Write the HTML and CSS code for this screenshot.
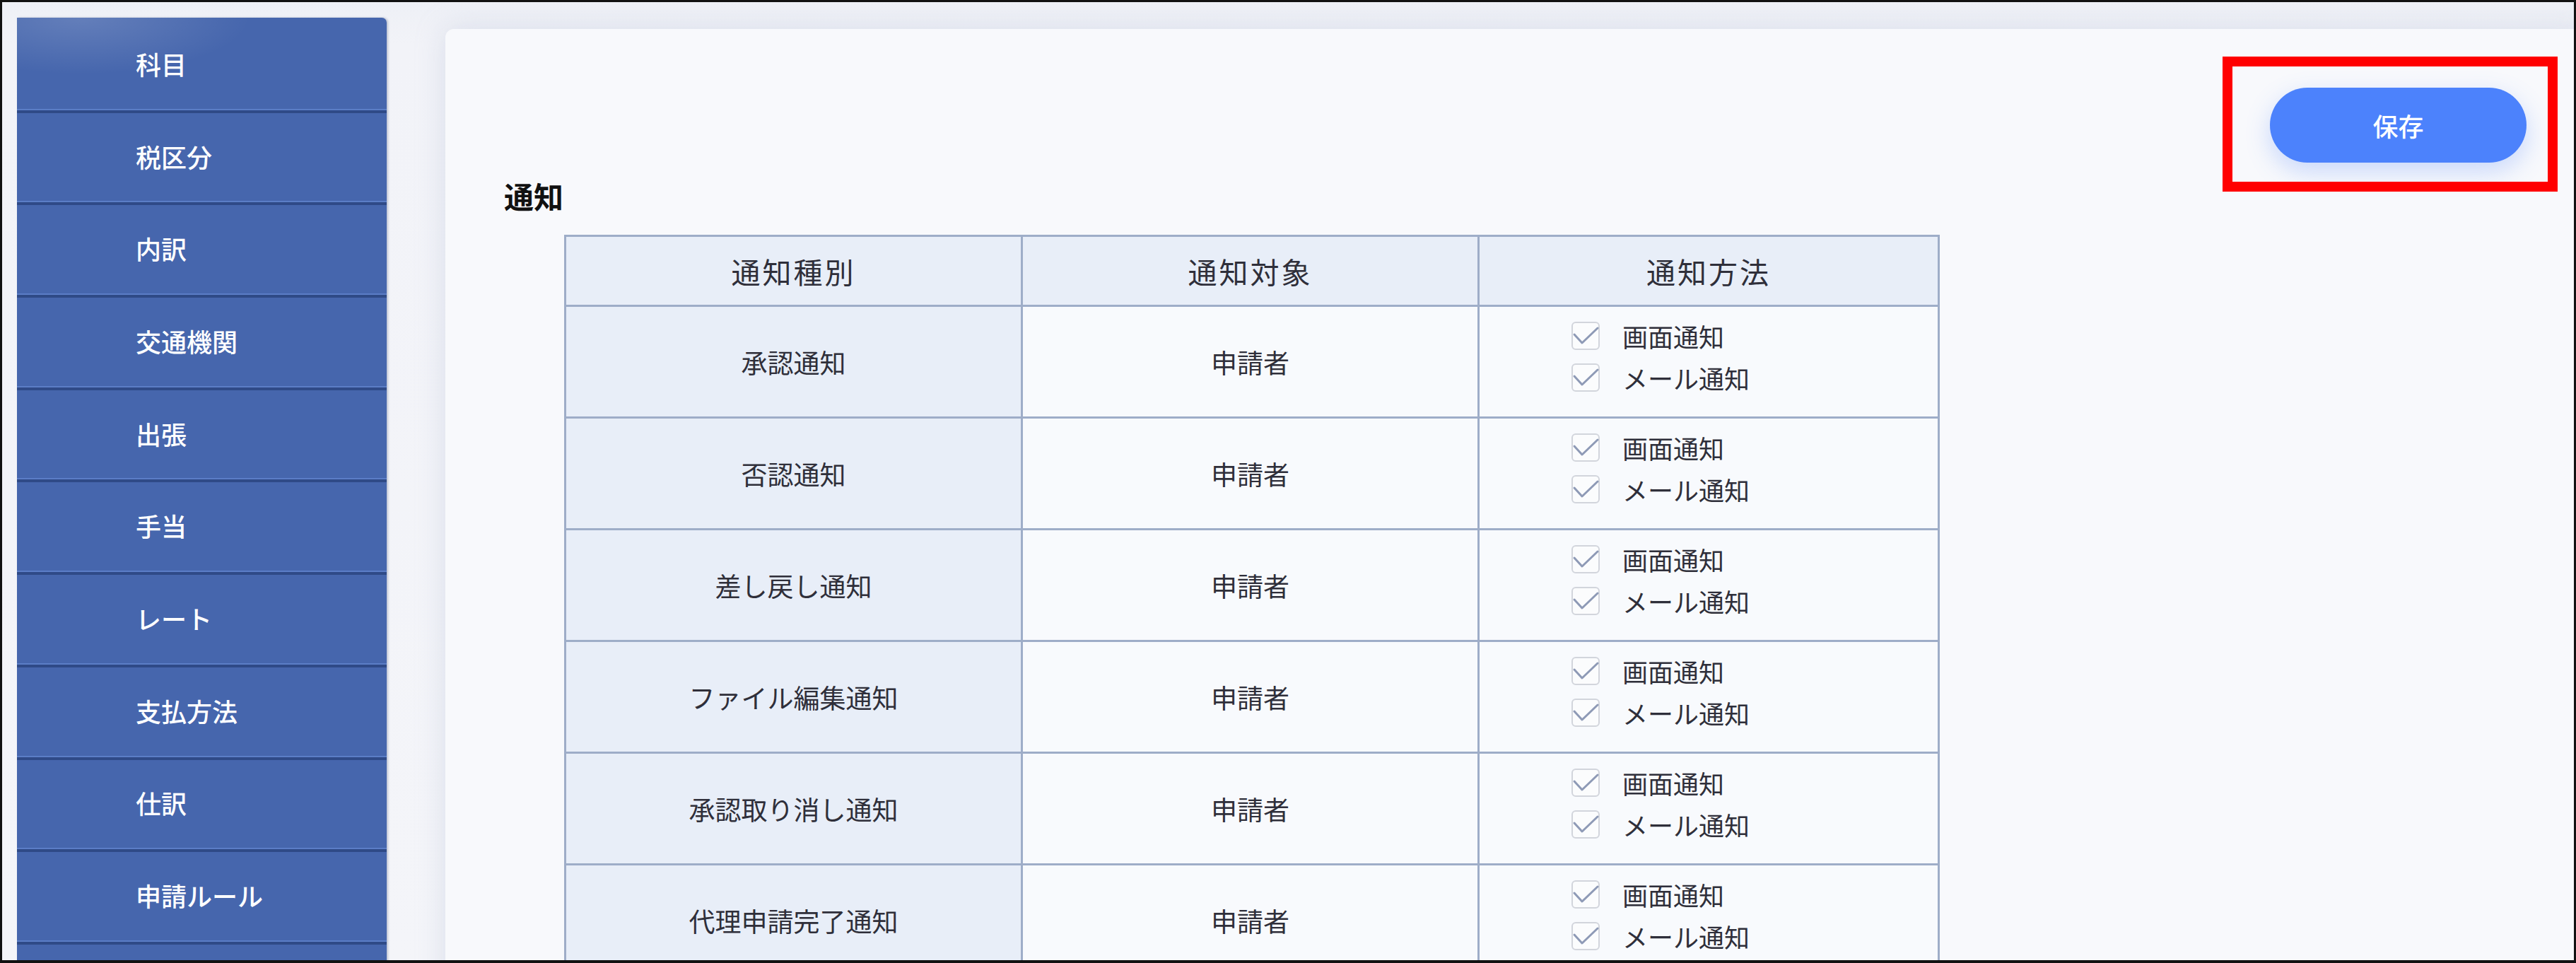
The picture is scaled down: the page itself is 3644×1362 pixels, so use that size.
FILE: index.html
```html
<!DOCTYPE html>
<html lang="ja">
<head>
<meta charset="utf-8">
<title>通知設定</title>
<link rel="stylesheet" href="styles.css">
</head>
<body>
<div class="frame">
  <nav class="sidebar">
    <div class="nav-item">科目</div>
    <div class="nav-item">税区分</div>
    <div class="nav-item">内訳</div>
    <div class="nav-item">交通機関</div>
    <div class="nav-item">出張</div>
    <div class="nav-item">手当</div>
    <div class="nav-item">レート</div>
    <div class="nav-item">支払方法</div>
    <div class="nav-item">仕訳</div>
    <div class="nav-item">申請ルール</div>
    <div class="nav-item"></div>
  </nav>
  <main class="card">
    <div class="toolbar">
      <button class="btn-save">保存</button>
    </div>
    <h2 class="section-title">通知</h2>
    <table class="notify-table">
      <colgroup>
        <col class="c1"><col class="c2"><col class="c3">
      </colgroup>
      <thead>
        <tr>
          <th><div class="hcell">通知種別</div></th>
          <th><div class="hcell">通知対象</div></th>
          <th><div class="hcell">通知方法</div></th>
        </tr>
      </thead>
      <tbody>
        <tr>
          <td class="kind"><div class="cell">承認通知</div></td>
          <td><div class="cell">申請者</div></td>
          <td><div class="cell methods"><label class="opt"><span class="cb"><svg viewBox="0 0 40 40"><polyline points="4,18 15,30 37,9"/></svg></span>画面通知</label><label class="opt"><span class="cb"><svg viewBox="0 0 40 40"><polyline points="4,18 15,30 37,9"/></svg></span>メール通知</label></div></td>
        </tr>
        <tr>
          <td class="kind"><div class="cell">否認通知</div></td>
          <td><div class="cell">申請者</div></td>
          <td><div class="cell methods"><label class="opt"><span class="cb"><svg viewBox="0 0 40 40"><polyline points="4,18 15,30 37,9"/></svg></span>画面通知</label><label class="opt"><span class="cb"><svg viewBox="0 0 40 40"><polyline points="4,18 15,30 37,9"/></svg></span>メール通知</label></div></td>
        </tr>
        <tr>
          <td class="kind"><div class="cell">差し戻し通知</div></td>
          <td><div class="cell">申請者</div></td>
          <td><div class="cell methods"><label class="opt"><span class="cb"><svg viewBox="0 0 40 40"><polyline points="4,18 15,30 37,9"/></svg></span>画面通知</label><label class="opt"><span class="cb"><svg viewBox="0 0 40 40"><polyline points="4,18 15,30 37,9"/></svg></span>メール通知</label></div></td>
        </tr>
        <tr>
          <td class="kind"><div class="cell">ファイル編集通知</div></td>
          <td><div class="cell">申請者</div></td>
          <td><div class="cell methods"><label class="opt"><span class="cb"><svg viewBox="0 0 40 40"><polyline points="4,18 15,30 37,9"/></svg></span>画面通知</label><label class="opt"><span class="cb"><svg viewBox="0 0 40 40"><polyline points="4,18 15,30 37,9"/></svg></span>メール通知</label></div></td>
        </tr>
        <tr>
          <td class="kind"><div class="cell">承認取り消し通知</div></td>
          <td><div class="cell">申請者</div></td>
          <td><div class="cell methods"><label class="opt"><span class="cb"><svg viewBox="0 0 40 40"><polyline points="4,18 15,30 37,9"/></svg></span>画面通知</label><label class="opt"><span class="cb"><svg viewBox="0 0 40 40"><polyline points="4,18 15,30 37,9"/></svg></span>メール通知</label></div></td>
        </tr>
        <tr>
          <td class="kind"><div class="cell">代理申請完了通知</div></td>
          <td><div class="cell">申請者</div></td>
          <td><div class="cell methods"><label class="opt"><span class="cb"><svg viewBox="0 0 40 40"><polyline points="4,18 15,30 37,9"/></svg></span>画面通知</label><label class="opt"><span class="cb"><svg viewBox="0 0 40 40"><polyline points="4,18 15,30 37,9"/></svg></span>メール通知</label></div></td>
        </tr>
      </tbody>
    </table>
  </main>
  <div class="highlight-box"></div>
</div>
</body>
</html>
```
FILE: styles.css
```css
* { box-sizing: border-box; }

html, body {
  margin: 0;
  padding: 0;
  background: #dcdcdc;
}

body {
  font-family: "Noto Sans CJK JP", "Noto Sans", sans-serif;
  color: #333;
}

.frame {
  position: relative;
  width: 3644px;
  height: 1362px;
  border: 3px solid #111;
  border-bottom-width: 4px;
  overflow: hidden;
  display: flex;
  align-items: flex-start;
  padding: 22px 0 0 21px;
  background: linear-gradient(180deg, #eef0f6 0px, #f2f3f8 60px, #f4f5f9 100%);
}

/* ---------- sidebar ---------- */
.sidebar {
  flex: 0 0 523px;
  width: 523px;
  height: 1420px;
  padding-top: 4px;
  background:
    radial-gradient(ellipse 240px 80px at 90px 0px, rgba(255,255,255,0.16), rgba(255,255,255,0) 100%),
    #4666ad;
  border-radius: 0 7px 0 0;
  box-shadow: 2px 0 3px rgba(30, 50, 100, 0.25);
}

.nav-item {
  height: 130.7px;
  display: flex;
  align-items: center;
  padding-left: 168px;
  padding-bottom: 5px;
  color: #ffffff;
  font-size: 36px;
  font-weight: 500;
  letter-spacing: 0;
  border-bottom: 4px solid #2f4a87;
  box-shadow: inset 0 -2px 0 #5b7dc6;
}

/* ---------- card ---------- */
.card {
  flex: 1 1 auto;
  margin: 16px -20px 0 83px;
  height: 1420px;
  background: #f8f9fc;
  border-radius: 12px 0 0 0;
  box-shadow: 0 0 40px rgba(170, 180, 210, 0.35);
  padding: 83px 87px 0 83px;
}

.toolbar {
  display: flex;
  justify-content: flex-end;
}

.btn-save {
  width: 363px;
  height: 106px;
  border: none;
  border-radius: 53px;
  background: #4c82fc;
  color: #ffffff;
  font-family: "Noto Sans CJK JP", sans-serif;
  font-size: 36px;
  font-weight: 500;
  box-shadow: 0 12px 34px rgba(76, 130, 252, 0.28);
}

.section-title {
  margin: 22px 0 0 0;
  font-size: 42px;
  line-height: 50px;
  font-weight: 700;
  color: #111;
}

/* ---------- table ---------- */
.notify-table {
  margin: 30px 0 0 85px;
  border-collapse: collapse;
  table-layout: fixed;
  width: 1943px;
  border: 3px solid #9eadc8;
}

.notify-table col.c1 { width: 646px; }
.notify-table col.c2 { width: 646px; }
.notify-table col.c3 { width: 651px; }

.notify-table th,
.notify-table td {
  border: 3px solid #9eadc8;
  padding: 0;
  vertical-align: middle;
}

.notify-table th {
  background: #e8eef8;
  font-weight: 400;
}

.hcell {
  height: 96px;
  display: flex;
  align-items: center;
  justify-content: center;
  font-size: 41px;
  letter-spacing: 3px;
  color: #2f2f3a;
}

.notify-table td {
  background: #f8fafd;
}

.notify-table td.kind {
  background: #e8eef8;
}

.cell {
  height: 155px;
  display: flex;
  align-items: center;
  justify-content: center;
  font-size: 37px;
  color: #2f2f3a;
}

.cell.methods {
  flex-direction: column;
  align-items: flex-start;
  justify-content: center;
  gap: 19px;
  padding-left: 130px;
  padding-bottom: 14px;
}

.opt {
  display: flex;
  align-items: center;
  height: 40px;
  font-size: 36px;
  color: #2f2f3a;
}

.cb {
  width: 40px;
  height: 40px;
  flex: 0 0 40px;
  margin-right: 32px;
  border: 2px solid #d2d5dc;
  border-radius: 6px;
  background: #fbfcfd;
  display: flex;
  align-items: center;
  justify-content: center;
  overflow: visible;
}

.cb svg {
  width: 40px;
  height: 40px;
  flex: 0 0 40px;
  fill: none;
  stroke: #8e9ab6;
  stroke-width: 3;
  stroke-linecap: round;
  stroke-linejoin: round;
}

/* ---------- annotation overlay ---------- */
.highlight-box {
  position: absolute;
  left: 3141px;
  top: 77px;
  width: 474px;
  height: 191px;
  border: 14px solid #ff0000;
  pointer-events: none;
}
```
